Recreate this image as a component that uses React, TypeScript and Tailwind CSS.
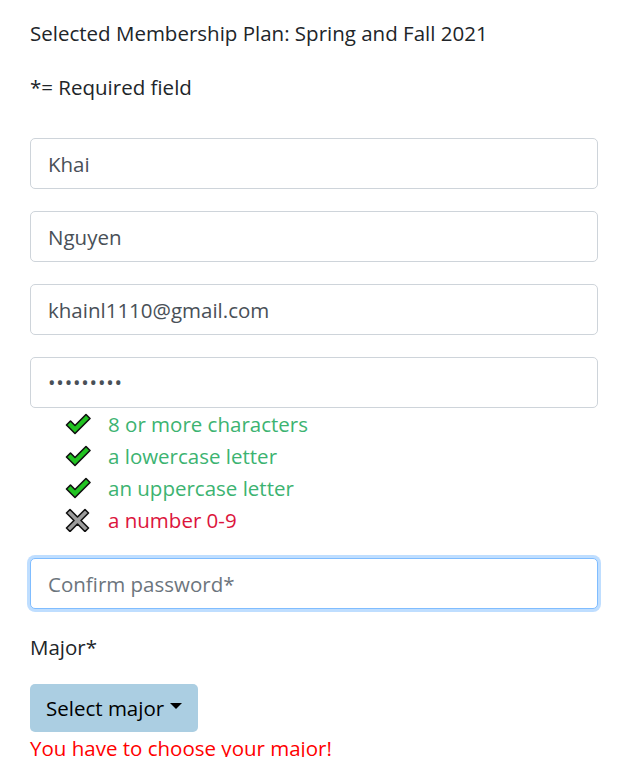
const rules = [
  { label: "8 or more characters", ok: true },
  { label: "a lowercase letter", ok: true },
  { label: "an uppercase letter", ok: true },
  { label: "a number 0-9", ok: false },
]

function Check() {
  return (
    <svg width="26" height="22" viewBox="0 0 26 22">
      <path
        d="M1.5 12 L5.5 8 L10 12.5 L21 1.5 L25 5.5 L10 20.5 Z"
        fill="#22c322"
        stroke="#111"
        strokeWidth="1.6"
        strokeLinejoin="round"
      />
    </svg>
  )
}

function Cross() {
  return (
    <svg width="26" height="24" viewBox="0 0 26 24">
      <path
        d="M1.5 5 L5 1.5 L12.5 9 L20 1.5 L23.5 5 L16 12.5 L23.5 20 L20 23.5 L12.5 16 L5 23.5 L1.5 20 L9 12.5 Z"
        fill="#9d9d9d"
        stroke="#111"
        strokeWidth="1.6"
        strokeLinejoin="round"
      />
    </svg>
  )
}

const inputCls =
  "block w-full h-[51px] px-[17px] rounded-[5px] border border-[#ced4da] bg-white text-[20.5px] text-[#495057] outline-none"

export default function App() {
  return (
    <div className="min-h-screen bg-white px-[30px] pt-[18px] font-['Open_Sans','Noto_Sans',sans-serif] text-[20.5px] leading-[30px] text-[#212529]">
      <p>Selected Membership Plan: Spring and Fall 2021</p>
      <p className="mt-[24px]">*= Required field</p>

      <div className="mt-[36px] flex flex-col gap-[22px]">
        <input className={inputCls} defaultValue="Khai" />
        <input className={inputCls} defaultValue="Nguyen" />
        <input className={inputCls} defaultValue="khainl1110@gmail.com" />
        <div>
          <input
            className="block w-full h-[51px] px-[17px] rounded-[5px] border border-[#ced4da] bg-white text-[20px] tracking-[0.8px] text-[#495057] outline-none"
            type="text"
            readOnly
            value="•••••••••"
          />
          <ul className="pl-[35px]">
            {rules.map((r) => (
              <li key={r.label} className="flex items-center gap-[17px] h-[32px]">
                {r.ok ? <Check /> : <Cross />}
                <span className={r.ok ? "text-[#3cb371]" : "text-[#dc143c]"}>{r.label}</span>
              </li>
            ))}
          </ul>
        </div>
      </div>

      <input
        className="mt-[22px] block w-full h-[51px] px-[17px] rounded-[5px] border border-[#80bdff] bg-white text-[20.5px] text-[#495057] outline-none shadow-[0_0_0_3px_rgba(0,123,255,0.25)] placeholder:text-[#6c757d]"
        placeholder="Confirm password*"
      />

      <p className="mt-[23px]">Major*</p>

      <button className="mt-[22px] flex items-center h-[48px] px-[16px] rounded-[5px] bg-[#abcee2] text-black text-[20.5px]">
        Select major
        <span className="ml-[6px] inline-block w-0 h-0 border-l-[6px] border-r-[6px] border-t-[6px] border-l-transparent border-r-transparent border-t-black mb-[4px]" />
      </button>
      <p className="text-[#ff0000] leading-[32px]">You have to choose your major!</p>
    </div>
  )
}
